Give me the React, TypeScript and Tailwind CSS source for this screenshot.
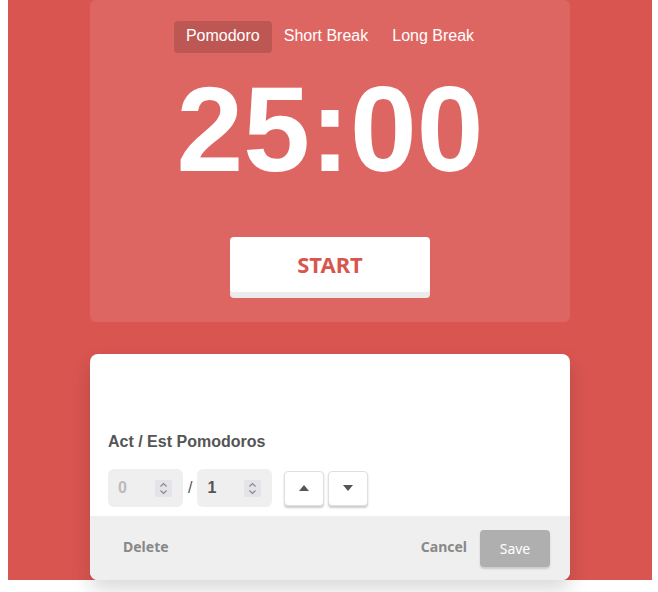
import React from "react";

function Spinner() {
  return (
    <div className="w-[17px] h-[17px] bg-[#e3e3e8] rounded-[2px] flex items-center justify-center">
      <svg width="9" height="13" viewBox="0 0 9 13" fill="none" stroke="#8a8a8a" strokeWidth="1.2">
        <path d="M1.5 4.5 L4.5 1.5 L7.5 4.5" />
        <path d="M1.5 8.5 L4.5 11.5 L7.5 8.5" />
      </svg>
    </div>
  );
}

export default function App() {
  return (
    <div className="w-[658px] h-[592px] bg-white pl-2" style={{ fontFamily: '"Liberation Sans", Arial, sans-serif' }}>
      <div className="w-[644px] h-[580px] bg-[#d95550] flex flex-col items-center">
        <div className="w-[480px] h-[322px] rounded-md bg-[#de6662] flex flex-col items-center pt-[21px]">
          <div className="flex text-white text-[16px] leading-[30px]">
            <div className="px-3 h-[32px] rounded bg-[#bd5753]">Pomodoro</div>
            <div className="px-3 h-[32px]">Short Break</div>
            <div className="px-3 h-[32px]">Long Break</div>
          </div>
          <div className="mt-4 text-white font-bold text-[120px] leading-[120px] h-[120px]">25:00</div>
          <button
            className="mt-12 w-[200px] h-[55px] bg-white rounded text-[#d95550] text-[22px] font-bold shadow-[0_6px_0_#ebebeb]"
            style={{ fontFamily: '"Noto Sans", "Open Sans", sans-serif' }}
          >
            START
          </button>
        </div>
        <div className="mt-8 w-[480px] h-[226px] bg-white rounded-lg shadow-[0_10px_20px_rgba(0,0,0,0.15)] flex flex-col overflow-hidden">
          <div className="px-[18px] pt-[76px] h-[162px]">
            <div className="text-[16px] leading-[24px] font-bold text-[#555]">Act / Est Pomodoros</div>
            <div className="mt-[15px] flex items-center">
              <div className="w-[75px] h-[38px] rounded-md bg-[#efefef] flex items-center justify-between pl-[10px] pr-[11px]">
                <span className="text-[16px] font-bold text-[#bbb]">0</span>
                <Spinner />
              </div>
              <span className="mx-[5px] text-[16px] text-[#555]">/</span>
              <div className="w-[75px] h-[38px] rounded-md bg-[#efefef] flex items-center justify-between pl-[10px] pr-[11px]">
                <span className="text-[16px] font-bold text-[#555]">1</span>
                <Spinner />
              </div>
              <button className="ml-3 w-[40px] h-[35px] bg-white rounded border border-[#dfdfdf] shadow-[0_2px_2px_rgba(0,0,0,0.2)] flex items-center justify-center">
                <svg width="10" height="6" viewBox="0 0 10 6"><path d="M0 6 L5 0 L10 6 Z" fill="#555" /></svg>
              </button>
              <button className="ml-1 w-[40px] h-[35px] bg-white rounded border border-[#dfdfdf] shadow-[0_2px_2px_rgba(0,0,0,0.2)] flex items-center justify-center">
                <svg width="10" height="6" viewBox="0 0 10 6"><path d="M0 0 L10 0 L5 6 Z" fill="#555" /></svg>
              </button>
            </div>
          </div>
          <div
            className="h-[64px] bg-[#efefef] flex items-center px-5"
            style={{ fontFamily: '"Noto Sans", "Open Sans", sans-serif' }}
          >
            <button className="px-[13px] mb-1 text-[14px] font-bold text-[#888]">Delete</button>
            <div className="ml-auto flex items-center">
              <button className="mb-1 text-[14px] font-bold text-[#888] mr-[13px]">Cancel</button>
              <button className="w-[70px] h-[37px] rounded bg-[#afafaf] text-white text-[14px] shadow-[0_2px_2px_rgba(0,0,0,0.15)]">Save</button>
            </div>
          </div>
        </div>
      </div>
    </div>
  );
}
